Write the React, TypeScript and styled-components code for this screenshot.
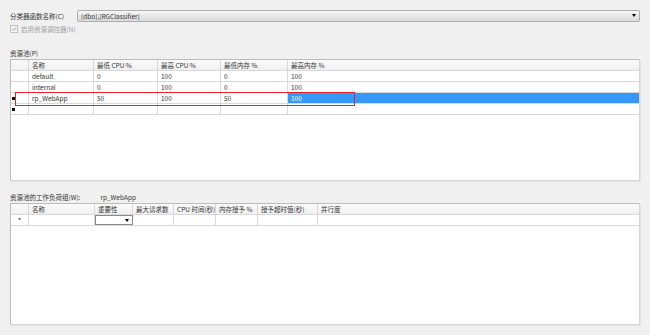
import styled, { createGlobalStyle } from "styled-components";

const GlobalStyle = createGlobalStyle`
    html, body {
        margin: 0;
        padding: 0;
        background: #f0f0f0;
    }
    body {
        font-family: "Noto Sans CJK SC", "Liberation Sans", sans-serif;
        font-size: 6.5px;
        color: #333;
    }
`;

const Page = styled.div`
    width: 650px;
    height: 335px;
    padding: 9px 10px 0 10px;
    box-sizing: border-box;
    display: flex;
    flex-direction: column;
`;

const FieldRow = styled.div`
    display: flex;
    align-items: center;
    height: 13px;
`;

const FieldLabel = styled.span`
    width: 65px;
    white-space: nowrap;
`;

const Combo = styled.div`
    flex: 1;
    height: 12px;
    margin-left: 2px;
    box-sizing: border-box;
    border: 1px solid #adadad;
    border-radius: 2px;
    background: linear-gradient(#f7f7f7, #e6e6e6 50%, #dadada);
    display: flex;
    align-items: center;
    justify-content: space-between;
    padding: 0 3px;
`;

const ComboArrow = styled.span`
    width: 0;
    height: 0;
    border-left: 2px solid transparent;
    border-right: 2px solid transparent;
    border-top: 3px solid #000;
`;

const CheckRow = styled.div`
    display: flex;
    align-items: center;
    gap: 3px;
    height: 12px;
    margin-top: 1px;
    color: #a0a0a0;
`;

const CheckBox = styled.span`
    width: 6px;
    height: 6px;
    border: 1px solid #c0c0c0;
    background: #f4f4f4;
    display: flex;
    align-items: center;
    justify-content: center;
`;

const SectionLabel = styled.div<{ $top: number }>`
    margin-top: ${(p) => p.$top}px;
    height: 10px;
    display: flex;
    align-items: center;
    gap: 20px;
    white-space: nowrap;
`;

const Grid = styled.div<{ $height: number }>`
    position: relative;
    margin-top: 1px;
    height: ${(p) => p.$height}px;
    box-sizing: border-box;
    border: 1px solid #bcbcbc;
    border-right-color: #d6d6d6;
    border-bottom-color: #d6d6d6;
    background: #fff;
    box-shadow: 1px 1px 0 #e2e2e2;
`;

const Row = styled.div<{ $cols: string; $header?: boolean }>`
    display: grid;
    grid-template-columns: ${(p) => p.$cols};
    height: 11px;
    background: ${(p) => (p.$header ? "linear-gradient(#fafafa, #f0f0f0)" : "#fff")};
    border-bottom: 1px solid #d8d8d8;
    box-sizing: border-box;
`;

const Cell = styled.div<{ $selected?: boolean }>`
    border-right: 1px solid #d8d8d8;
    padding-left: 3px;
    display: flex;
    align-items: center;
    white-space: nowrap;
    overflow: hidden;
    background: ${(p) => (p.$selected ? "#3399ff" : "transparent")};
    color: ${(p) => (p.$selected ? "#fff" : "inherit")};

    &:last-child {
        border-right: none;
    }
`;

const RowHead = styled(Cell)`
    justify-content: center;
    padding-left: 0;
    font-size: 8px;
`;

const DropCell = styled(Cell)`
    border: 1px solid #8a8a8a;
    justify-content: flex-end;
    padding-right: 3px;
`;

const SelectionBox = styled.div`
    position: absolute;
    left: 4px;
    top: 32px;
    width: 340px;
    height: 14px;
    border: 1.5px solid #e0262a;
    box-sizing: border-box;
    pointer-events: none;
`;

const Marker = styled.span<{ $top: number }>`
    position: absolute;
    left: 1px;
    top: ${(p) => p.$top}px;
    width: 3px;
    height: 3px;
    background: #111;
`;

const poolCols = "18px 65px 64px 63px 67px 1fr";
const groupCols = "18px 66px 38px 41px 42px 42px 60px 1fr";

const pools = [
    ["default", "0", "100", "0", "100"],
    ["internal", "0", "100", "0", "100"],
    ["rp_WebApp", "50", "100", "50", "100"],
];

export default function App() {
    return (
        <>
            <GlobalStyle />
            <Page>
                <FieldRow>
                    <FieldLabel>分类器函数名称(C)</FieldLabel>
                    <Combo>
                        <span>[dbo].[RGClassifier]</span>
                        <ComboArrow />
                    </Combo>
                </FieldRow>
                <CheckRow>
                    <CheckBox>
                        <svg width="6" height="6" viewBox="0 0 6 6">
                            <path d="M1 3 L2.5 4.5 L5 1.2" fill="none" stroke="#a8a8a8" strokeWidth="1" />
                        </svg>
                    </CheckBox>
                    <span>启用资源调控器(N)</span>
                </CheckRow>

                <SectionLabel $top={13}>资源池(P)</SectionLabel>
                <Grid $height={122}>
                    <Row $cols={poolCols} $header>
                        <Cell />
                        <Cell>名称</Cell>
                        <Cell>最低 CPU %</Cell>
                        <Cell>最高 CPU %</Cell>
                        <Cell>最低内存 %</Cell>
                        <Cell>最高内存 %</Cell>
                    </Row>
                    {pools.map((p, i) => (
                        <Row key={p[0]} $cols={poolCols}>
                            <Cell />
                            {p.map((v, j) => (
                                <Cell key={j} $selected={i === 2 && j === 4}>
                                    {v}
                                </Cell>
                            ))}
                        </Row>
                    ))}
                    <Row $cols={poolCols}>
                        <Cell />
                        <Cell />
                        <Cell />
                        <Cell />
                        <Cell />
                        <Cell />
                    </Row>
                    <SelectionBox />
                    <Marker $top={37} />
                    <Marker $top={48} />
                </Grid>

                <SectionLabel $top={11}>
                    <span>资源池的工作负荷组(W):</span>
                    <span>rp_WebApp</span>
                </SectionLabel>
                <Grid $height={122}>
                    <Row $cols={groupCols} $header>
                        <Cell />
                        <Cell>名称</Cell>
                        <Cell>重要性</Cell>
                        <Cell>最大请求数</Cell>
                        <Cell>CPU 时间(秒)</Cell>
                        <Cell>内存授予 %</Cell>
                        <Cell>授予超时值(秒)</Cell>
                        <Cell>并行度</Cell>
                    </Row>
                    <Row $cols={groupCols}>
                        <RowHead>*</RowHead>
                        <Cell />
                        <DropCell>
                            <ComboArrow />
                        </DropCell>
                        <Cell />
                        <Cell />
                        <Cell />
                        <Cell />
                        <Cell />
                    </Row>
                </Grid>
            </Page>
        </>
    );
}
